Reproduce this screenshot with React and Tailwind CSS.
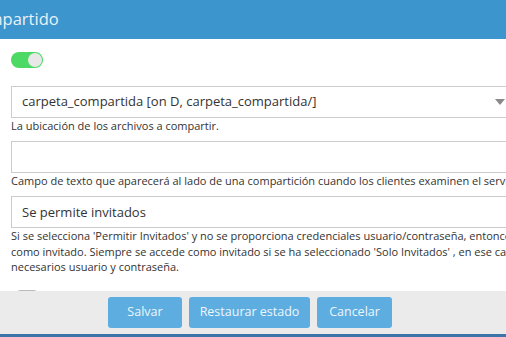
export default function App() {
  const font = { fontFamily: '"Open Sans", "Liberation Sans", sans-serif' };
  return (
    <div style={font} className="w-[506px] h-[337px] overflow-hidden flex flex-col bg-white text-[#333]">
      {/* Header */}
      <div className="h-[39px] shrink-0 bg-[#3d95ce] flex items-center overflow-hidden">
        <span className="ml-[-33px] text-[16.5px] text-[#e9f1f8] whitespace-nowrap">Compartido</span>
      </div>

      {/* Body */}
      <div className="flex-1 overflow-hidden pl-[11px] w-[530px]">
        <div className="mt-[13px] w-[32px] h-[16px] rounded-full bg-[#4cd964] flex items-center justify-end pr-[1px]">
          <div className="w-[14px] h-[14px] rounded-full bg-[#e8e8e8]" />
        </div>

        <div className="mt-[18px] h-[32px] border border-[#cccccc] flex items-center pl-[10px] pr-[22px] relative">
          <span className="text-[13px] whitespace-nowrap">carpeta_compartida [on D, carpeta_compartida/]</span>
          <span className="absolute left-[483px] top-[12px] w-0 h-0 border-l-[5px] border-r-[5px] border-t-[6px] border-l-transparent border-r-transparent border-t-[#8a8a8a]" />
        </div>
        <p className="text-[11px] leading-[15px] whitespace-nowrap">La ubicación de los archivos a compartir.</p>

        <div className="mt-[8px] h-[32px] border border-[#cccccc]" />
        <p className="text-[11px] leading-[15px] whitespace-nowrap">Campo de texto que aparecerá al lado de una compartición cuando los clientes examinen el servidor.</p>

        <div className="mt-[8px] h-[32px] border border-[#cccccc] flex items-center pl-[10px] pt-[2px]">
          <span className="text-[13px] whitespace-nowrap">Se permite invitados</span>
        </div>
        <p className="text-[11px] leading-[15.5px] w-[560px]">
          Si se selecciona 'Permitir Invitados' y no se proporciona credenciales usuario/contraseña, entonces se accede como invitado. Siempre se accede como invitado si se ha seleccionado 'Solo Invitados' , en ese caso no son necesarios usuario y contraseña.
        </p>

        <div className="mt-[15px] ml-[5px] w-[22px] h-[16px] rounded-[4px] border border-[#bbbbbb]" />
      </div>

      {/* Footer */}
      <div className="h-[46px] shrink-0 bg-[#ebebeb] border-b-[3px] border-[#3a74a8] flex items-start pt-[6px] pl-[108px] gap-[7px]">
        <button className="w-[74px] h-[31px] rounded-[3px] bg-[#5dade0] text-[#eef6fc] text-[12.5px]">Salvar</button>
        <button className="w-[121px] h-[31px] rounded-[3px] bg-[#5dade0] text-[#eef6fc] text-[12.5px]">Restaurar estado</button>
        <button className="w-[75px] h-[31px] rounded-[3px] bg-[#5dade0] text-[#eef6fc] text-[12.5px]">Cancelar</button>
      </div>
    </div>
  );
}
